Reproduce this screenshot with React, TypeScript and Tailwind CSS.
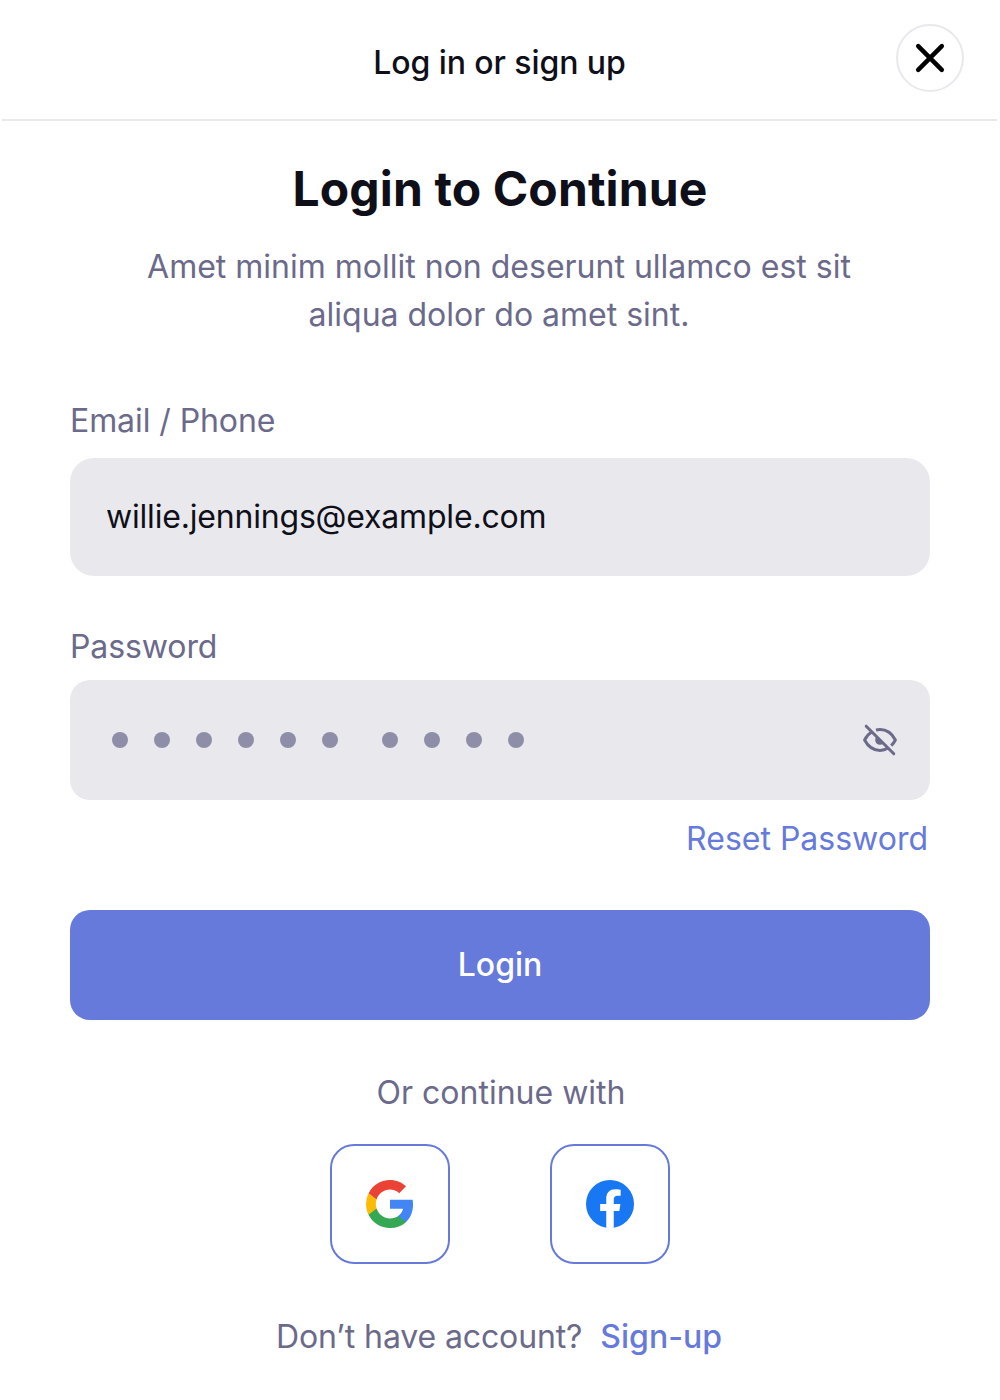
import React from 'react';

function CloseIcon() {
  return (
    <svg width="32" height="32" viewBox="0 0 32 32" fill="none" stroke="#000" strokeWidth="4.5" strokeLinecap="round">
      <path d="M4.2 4.2L27.8 27.8M27.8 4.2L4.2 27.8" />
    </svg>
  );
}

function EyeOffIcon() {
  return (
    <svg width="40" height="40" viewBox="0 0 40 40" fill="none" stroke="#6b6a8b" strokeWidth="3" strokeLinejoin="round">
      <path d="M6.2 6.2L33.8 33.8" strokeLinecap="round" />
      <path d="M12.4 11.5C9.2 13.3 6.5 16.2 4.6 20C8 26.5 13.6 30.4 20 30.4C23 30.4 25.6 29.6 28 28.1" />
      <path d="M16 10C17.3 9.7 18.8 9.6 20 9.6C26.4 9.6 32 13.5 35.4 20C34.3 22.1 33 23.9 31.2 25.6" />
      <path d="M16.6 16.6A4.8 4.8 0 0 0 23.4 23.4Z" fill="#6b6a8b" stroke="none" />
    </svg>
  );
}

function GoogleIcon() {
  return (
    <svg width="48" height="48" viewBox="0 0 48 48">
      <path fill="#4285F4" d="M47.04 24.55c0-1.63-.15-3.2-.42-4.7H24v9.02h13.0c-.6 2.98-2.3 5.5-4.87 7.2v5.98h7.9c4.62-4.26 7.01-10.52 7.01-17.5z" />
      <path fill="#34A853" d="M24 48c6.48 0 11.92-2.13 15.9-5.8l-7.57-6.13c-2.1 1.45-4.97 2.38-8.33 2.38-6.25 0-11.55-4.22-13.44-9.9H2.55v6.2C6.5 42.6 14.6 48 24 48z" />
      <path fill="#FBBC05" d="M10.56 28.55A14.4 14.4 0 0 1 9.8 24c0-1.58.28-3.12.76-4.55l-8.01-6.2A24 24 0 0 0 0 24c0 3.87.93 7.53 2.55 10.75z" />
      <path fill="#EA4335" d="M24 9.55c3.54 0 6.7 1.22 9.2 3.6l6.85-6.84C35.9 2.4 30.47 0 24 0 14.6 0 6.5 5.4 2.55 13.25l8.01 6.2C12.45 13.77 17.75 9.55 24 9.55z" />
    </svg>
  );
}

function FacebookIcon() {
  return (
    <svg width="48" height="48" viewBox="0 0 48 48">
      <circle cx="24" cy="24" r="24" fill="#1877F2" />
      <path fill="#fff" d="M20.25 47.7V30.94h-6.1V24h6.1v-5.3c0-6 3.58-9.33 9.07-9.33 2.63 0 5.37.47 5.37.47v5.91h-3.03c-2.98 0-3.91 1.85-3.91 3.75V24h6.66l-1.07 6.94h-5.59V47.7a24 24 0 0 1-7.5 0z" />
    </svg>
  );
}

const dots = ['ml-0', 'ml-[26px]', 'ml-[26px]', 'ml-[26px]', 'ml-[26px]', 'ml-[26px]', 'ml-[44px]', 'ml-[26px]', 'ml-[26px]', 'ml-[26px]'];

export default function App() {
  return (
    <main className="h-[1400px] w-[1000px] overflow-hidden bg-white font-['Inter',sans-serif] text-[32px] leading-[48px] text-[#6b6a8b]">
      <header className="mr-[3px] ml-0.5 grid h-[121px] grid-cols-[1fr_auto_1fr] border-b-2 border-[#e9e9ed]">
        <span />
        <h1 className="mt-[39px] font-medium tracking-[-0.08px] text-[#0f0f19]">Log in or sign up</h1>
        <button aria-label="Close" className="mt-6 mr-[33px] flex size-[68px] items-center justify-center justify-self-end rounded-full border-2 border-[#e9e9ed]">
          <CloseIcon />
        </button>
      </header>
      <section className="px-[70px] pt-10">
        <h2 className="text-center text-[48px] leading-[56px] font-bold tracking-[0.12px] text-[#0f0f19]">Login to Continue</h2>
        <p className="mt-[26px] mr-0.5 text-center">Amet minim mollit non deserunt ullamco est sit<br />aliqua dolor do amet sint.</p>
        <div className="mt-[58px] tracking-[-0.08px]">Email / Phone</div>
        <div className="mt-[13px] flex h-[118px] items-center rounded-3xl bg-[#e9e9ed] px-9 tracking-[-0.19px] text-[#0f0f19]">willie.jennings@example.com</div>
        <div className="mt-[47px] tracking-[-0.1px]">Password</div>
        <div className="mt-[9px] flex h-[120px] items-center rounded-[20px] bg-[#e9e9ed] pr-[30px] pl-[42px]">
          {dots.map((gap, i) => <span key={i} className={`size-4 rounded-full bg-[#8f8ea8] ${gap}`} />)}
          <button aria-label="Show password" className="ml-auto"><EyeOffIcon /></button>
        </div>
        <div className="mt-[15px] mr-0.5 text-right text-[#667adc]">Reset Password</div>
        <button className="mt-[47px] flex h-[110px] w-full items-center justify-center rounded-[20px] bg-[#667adc] font-medium text-white">Login</button>
        <p className="mt-[49px] ml-0.5 text-center">Or continue with</p>
        <div className="mt-[27px] flex justify-center gap-[100px]">
          <button aria-label="Google" className="flex size-[120px] items-center justify-center rounded-3xl border-2 border-[#667adc]"><GoogleIcon /></button>
          <button aria-label="Facebook" className="flex size-[120px] items-center justify-center rounded-3xl border-2 border-[#667adc]"><FacebookIcon /></button>
        </div>
        <p className="mt-[49px] mr-[2px] flex justify-center gap-[18px]"><span className="tracking-[-0.12px]">Don’t have account?</span><a className="font-medium text-[#667adc]">Sign-up</a></p>
      </section>
    </main>
  );
}
